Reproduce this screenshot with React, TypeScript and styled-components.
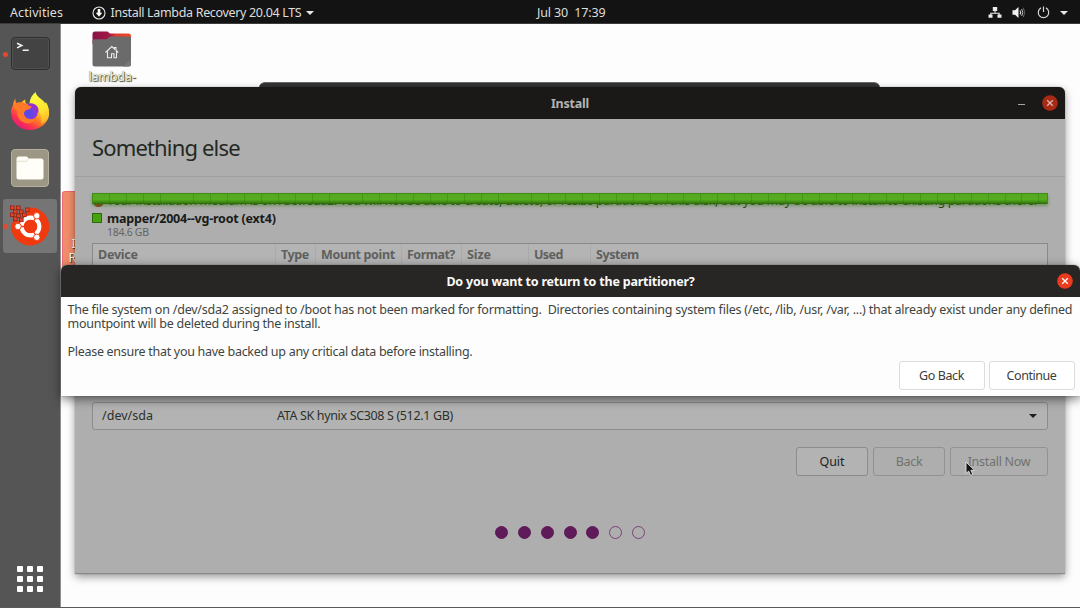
import React from "react";
import styled, { createGlobalStyle, css } from "styled-components";

const Global = createGlobalStyle`
  *, *::before, *::after { box-sizing: border-box; }
  body {
    margin: 0;
    overflow: hidden;
    background: #fdfdfd;
    font: 400 12.5px/14px "Noto Sans", "Open Sans", sans-serif;
    color: #3b3f3a;
  }
`;

/* Text with its own tracking, so that each label keeps its width */
const Label = styled.span<{ $track?: number }>`
  white-space: pre;
  letter-spacing: ${(p) => p.$track ?? -0.25}px;
`;

const Screen = styled.div`
  width: 1080px;
  height: 608px;
  display: flex;
  flex-direction: column;
  overflow: hidden;
  background: #fdfdfd;
  border-bottom: 1px solid #5a5a5a;
`;

/* ---------- Top bar ---------- */

const TopBar = styled.header`
  flex: none;
  height: 24px;
  display: grid;
  grid-template-columns: 527px auto 1fr;
  align-items: center;
  padding: 2px 12px 0 10px;
  background: #131313;
  border-bottom: 1px solid #3c3c3c;
  color: #dedede;
`;

const TopGroup = styled.div<{ $gap: number; $end?: boolean }>`
  display: flex;
  align-items: center;
  gap: ${(p) => p.$gap}px;
  justify-content: ${(p) => (p.$end ? "flex-end" : "flex-start")};
`;

const AppMenu = styled.div`
  display: flex;
  align-items: center;
  gap: 5px;
`;

const Caret = styled.i<{ $color: string }>`
  width: 0;
  height: 0;
  border: 4px solid transparent;
  border-top: 4.5px solid ${(p) => p.$color};
  border-bottom: 0;
`;

/* ---------- Dock ---------- */

const Body = styled.div`
  flex: 1;
  display: flex;
  min-height: 0;
`;

const Dock = styled.nav`
  flex: none;
  width: 61px;
  display: flex;
  flex-direction: column;
  align-items: center;
  gap: 3.4px;
  padding: 2.5px 0 15px 0;
  background: #555;
  border-right: 1px solid #909090;
`;

const DockItem = styled.div<{ $active?: boolean; $running?: boolean }>`
  position: relative;
  width: 54px;
  height: 54px;
  display: flex;
  align-items: center;
  justify-content: center;
  border-radius: 3px;
  background: ${(p) => (p.$active ? "#757575" : "transparent")};
  ${(p) =>
    p.$running &&
    css`
      &::before {
        content: "";
        position: absolute;
        left: 0;
        top: 25px;
        width: 5px;
        height: 5px;
        border-radius: 50%;
        background: #e5482d;
      }
    `}
`;

const TerminalTile = styled.div`
  width: 39px;
  height: 33px;
  padding: 3px 4px;
  border: 1px solid #2e2e2e;
  border-radius: 4px;
  background: #434343;
  box-shadow: inset 0 0 0 1px #505050;
  color: #f2f2f2;
`;

const FilesTile = styled.div`
  width: 38px;
  height: 38px;
  display: flex;
  align-items: center;
  justify-content: center;
  border-radius: 4px;
  border: 1.5px solid #b5b09c;
  background: #9c9785;
`;

const AppsGrid = styled.div`
  margin-top: auto;
  display: grid;
  grid-template-columns: repeat(3, 5.6px);
  grid-auto-rows: 5.6px;
  gap: 4.6px;
`;

const AppsDot = styled.i`
  border-radius: 1px;
  background: #fff;
`;

/* ---------- Desktop ---------- */

const Desk = styled.main`
  position: relative;
  flex: 1;
`;

const HomeIcon = styled.div`
  position: absolute;
  left: 21px;
  top: 7px;
  width: 60px;
  display: flex;
  flex-direction: column;
  align-items: center;
  gap: 3px;
  color: #f4f5ea;
  text-shadow: 1px 1px 1px #3d4020, 0 0 1px #56592e;
`;

const InstallerShortcut = styled.div`
  position: absolute;
  left: 0.5px;
  top: 167px;
  width: 14px;
  height: 80px;
  overflow: hidden;
  padding: 45px 0 0 6px;
  display: flex;
  flex-direction: column;
  border: 1px solid #ee6a72;
  border-right: 0;
  border-radius: 3px 0 0 0;
  background: #f28d6b;
  color: #fff;
  text-shadow: 1px 1px 1px #44200f;
`;

const BackWindow = styled.div`
  position: absolute;
  left: 198px;
  top: 58px;
  width: 621px;
  height: 30px;
  border-radius: 6px 6px 0 0;
  background: #343436;
  border-top: 1px solid #6a6a6a;
`;

const Window = styled.section`
  position: absolute;
  left: 14px;
  top: 63px;
  width: 990px;
  height: 487px;
  display: flex;
  flex-direction: column;
  border-radius: 6px 6px 0 0;
  background: #aeaeae;
  box-shadow: 0 3px 8px rgba(0, 0, 0, 0.4), 0 0 1px rgba(0, 0, 0, 0.6);
  border-bottom: 1px solid #888;
`;

const TitleBar = styled.div<{ $bg: string; $fg: string; $right: number }>`
  flex: none;
  height: 31.5px;
  display: grid;
  grid-template-columns: 1fr auto 1fr;
  align-items: center;
  padding: 0 ${(p) => p.$right}px;
  border-radius: 6px 6px 0 0;
  background: ${(p) => p.$bg};
  color: ${(p) => p.$fg};
  font-weight: 700;
`;

const Controls = styled.div`
  grid-column: 3;
  display: flex;
  justify-content: flex-end;
  align-items: center;
  gap: 17px;
`;

const Title = styled(Label)`
  grid-column: 2;
  padding-top: 2px;
`;

const Minimise = styled.i`
  width: 7px;
  height: 1px;
  margin-top: 3px;
  background: #a5a5a5;
`;

const Heading = styled.h1`
  flex: none;
  height: 58px;
  margin: 0;
  padding: 0 17px;
  display: flex;
  align-items: center;
  border-bottom: 1px solid #9f9f9f;
  color: #232823;
  font-weight: 400;
  font-size: 22px;
`;

const Content = styled.div`
  flex: 1;
  display: flex;
  flex-direction: column;
  padding: 16.5px 17px 0;
`;

const Notice = styled.div`
  position: absolute;
  left: 1px;
  right: 0;
  top: -1px;
  height: 17px;
  display: flex;
  align-items: center;
  gap: 3px;
  line-height: 17px;
  color: #24401a;
`;

const NoticeMark = styled.i`
  width: 11px;
  height: 11px;
  margin-top: 1px;
  border-radius: 50%;
  background: #8d3a20;
`;

const Usage = styled.div`
  position: relative;
  flex: none;
  height: 12px;
`;

const UsageBar = styled.div`
  position: absolute;
  inset: 0 0 1px 0;
  border: 1px solid #3f8d14;
  border-bottom: 0;
  background: repeating-linear-gradient(90deg, transparent 0 15.9px, rgba(40, 105, 8, 0.3) 15.9px 16.9px),
    linear-gradient(#58a823, #56ac1f 55%, #3c8411 85%, #2c620c);
  box-shadow: 0 2px 3px rgba(62, 124, 25, 0.5);
`;

const Legend = styled.div`
  flex: none;
  display: grid;
  grid-template-columns: 10px auto;
  column-gap: 5px;
  justify-content: start;
  margin-top: 7px;
  color: #191c19;
`;

const Swatch = styled.i`
  width: 10px;
  height: 10px;
  margin-top: 1px;
  border: 1px solid #2c6a0d;
  background: #45a30d;
`;

const LegendSize = styled(Label)`
  grid-column: 2;
  font-size: 10.5px;
  line-height: 12px;
  color: #646464;
`;

const Strong = styled(Label)`
  font-weight: 700;
`;

const Table = styled.div`
  flex: none;
  height: 152px;
  margin-top: 5px;
  border: 1px solid #8a8a8a;
  background: #b4b4b4;
`;

const TableHead = styled.div`
  display: grid;
  grid-template-columns: 183px 40px 86px 60px 67px 62px 1fr;
  height: 22px;
  align-items: center;
  color: #5f615e;
  font-weight: 700;
`;

const Column = styled.div`
  height: 100%;
  display: flex;
  align-items: center;
  padding: 0 0 1px 5px;
  border-right: 1px solid #aaa;
  &:last-child { border-right: 0; }
`;

const Select = styled.div`
  flex: none;
  height: 28.5px;
  margin-top: 6.5px;
  display: grid;
  grid-template-columns: 175px 1fr auto;
  align-items: center;
  padding: 0.5px 10px 0 9px;
  border: 1px solid #8c8c8c;
  border-radius: 3px;
  background: #b3b3b3;
  color: #2c302b;
`;

const Actions = styled.div<{ $gap: number }>`
  flex: none;
  display: flex;
  justify-content: flex-end;
  gap: ${(p) => p.$gap}px;
`;

const WindowActions = styled(Actions)`
  margin-top: 17px;
`;

const Button = styled.button<{ $w: number; $tone: "quiet" | "muted" | "light" }>`
  width: ${(p) => p.$w}px;
  height: 29px;
  display: flex;
  align-items: center;
  justify-content: center;
  padding: 0;
  border-radius: 3px;
  font: inherit;
  ${(p) =>
    p.$tone === "light"
      ? css`border: 1px solid #dcdcdc; background: #fff; color: #3b403a;`
      : p.$tone === "quiet"
      ? css`border: 1px solid #8c8c8c; background: #b3b3b3; color: #20241f;`
      : css`border: 1px solid #929292; background: #aeaeae; color: #70736f;`}
`;

const Steps = styled.div`
  flex: none;
  display: flex;
  justify-content: center;
  gap: 9.8px;
  margin-top: 50px;
`;

const Step = styled.i<{ $done: boolean }>`
  width: 13px;
  height: 13px;
  border-radius: 50%;
  border: 1px solid ${(p) => (p.$done ? "#5f1a59" : "#7a4176")};
  background: ${(p) => (p.$done ? "#5f1a59" : "transparent")};
`;

const Dialog = styled.section`
  position: absolute;
  left: 0;
  top: 241px;
  width: 1019px;
  height: 131px;
  display: flex;
  flex-direction: column;
  border-radius: 6px 6px 0 0;
  background: #fdfdfd;
  box-shadow: 0 3px 11px rgba(0, 0, 0, 0.55), 0 0 1px rgba(0, 0, 0, 0.7);
`;

const Message = styled.div`
  padding: 6px 6px 0 6.5px;
  display: flex;
  flex-direction: column;
  height: 64.5px;
  color: #3f453e;
`;

const Paragraph = styled.p`
  margin: 0 0 14px;
  display: flex;
  flex-direction: column;
`;

const DialogActions = styled(Actions)`
  padding-right: 5.5px;
`;

const PointerLayer = styled.svg`
  position: absolute;
  left: 904px;
  top: 437px;
`;

/* ---------- Drawings ---------- */

const InstallGlyph = () => (
  <svg width="14" height="14" viewBox="0 0 14 14">
    <circle cx="7" cy="7" r="6" fill="none" stroke="#e6e6e6" strokeWidth="1.1" />
    <path d="M5.7 3h2.6v3.8h2L7 10.8 3.7 6.8h2z" fill="#fff" />
  </svg>
);

const NetworkGlyph = () => (
  <svg width="14" height="13" viewBox="0 0 14 13" fill="#ececec">
    <path d="M4.8 1h4.4v4H7.5v1.7h4.2V8.5H13.5v3.2H9.5V8.5h1.200V7.700H3.300v.8h1.200v3.200H.5V8.500h1.800V6.700h4.200V5H4.800z" />
  </svg>
);

const SpeakerGlyph = () => (
  <svg width="14" height="13" viewBox="0 0 14 13">
    <path d="M.5 4.300h2.500L6.500 1v11L3 8.700H.5z" fill="#f2f2f2" />
    <path d="M8 4.500q1.300 2 0 4" fill="none" stroke="#e0e0e0" strokeWidth="1.1" />
    <path d="M9.700 3q2.300 3.500 0 7" fill="none" stroke="#c0c0c0" strokeWidth="1" />
    <path d="M11.300 1.800q3 4.700 0 9.400" fill="none" stroke="#777" strokeWidth=".8" />
  </svg>
);

const PowerGlyph = () => (
  <svg width="13" height="13" viewBox="0 0 13 13" fill="none" stroke="#d6d6d6" strokeWidth="1.2">
    <path d="M4 1.900a5.200 5.200 0 1 0 5 0M6.500 .5v5.500" />
  </svg>
);

const CloseGlyph = ({ fill, cross }: { fill: string; cross: string }) => (
  <svg width="16" height="16" viewBox="0 0 16 16">
    <circle cx="8" cy="8" r="7.8" fill={fill} />
    <path d="M5.200 5.200l5.600 5.600M10.800 5.200l-5.600 5.600" stroke={cross} strokeWidth="1.3" />
  </svg>
);

const PromptGlyph = () => (
  <svg width="16" height="14" viewBox="0 0 16 14" fill="none" stroke="#f4f4f4" strokeWidth="1.5">
    <path d="M1 2.200l4.800 2.300L1 6.900M6.700 9.300h6" />
  </svg>
);

const FirefoxGlyph = () => (
  <svg width="40" height="40" viewBox="0 0 40 40">
    <defs>
      <linearGradient id="fxBody" x1="0.85" y1="0.1" x2="0.2" y2="0.9">
        <stop offset="0" stopColor="#fff44c" />
        <stop offset=".3" stopColor="#ffc92a" />
        <stop offset=".55" stopColor="#ff7a24" />
        <stop offset=".8" stopColor="#fb3150" />
        <stop offset="1" stopColor="#ee1a78" />
      </linearGradient>
      <radialGradient id="fxGlobe" cx=".4" cy=".6" r=".7">
        <stop offset="0" stopColor="#4b4be6" />
        <stop offset=".6" stopColor="#7d3fe0" />
        <stop offset="1" stopColor="#a92bc0" />
      </radialGradient>
      <linearGradient id="fxTail" x1=".3" y1="0" x2=".6" y2="1">
        <stop offset="0" stopColor="#f8ff45" />
        <stop offset=".6" stopColor="#ffe52e" />
        <stop offset="1" stopColor="#ffb52a" />
      </linearGradient>
    </defs>
    <path
      d="M5.500 7.500c-.3 2 .1 3.400.8 4.600 1.700-.6 3.400-.5 4.800 0 1-1.500 2.300-2.600 4.200-3.500-.3 1.700 0 3 .9 4.200l3 .3 8-2 9 1.500c2.500 4 3.400 8.500 2.600 13C36.800 33 29.500 39 20.300 39 10 39 1.500 31.500 1 22c-.1-3 .6-5.400 1.900-7.600C3.200 12 4 9.500 5.500 7.500z"
      fill="url(#fxBody)"
    />
    <path
      d="M25.600 1c.8 4 4.300 6 7 8.300 1.200 1 1.900 2 2.300 3.200.6-.2.900-.9 1-1.500 2.500 4 3.400 8.500 2.600 13-1 4-3.500 7-7.500 9 1.600-5.300-.2-10.800-3.800-14-3-2.500-7-4-7.800-6.500.5-5 3-9 6.200-11.500z"
      fill="url(#fxTail)"
    />
    <circle cx="20" cy="21" r="7.8" fill="url(#fxGlobe)" />
    <path d="M17 13c3.500-1.800 8.500-.8 10.500 2.800 1.300 2.400 1.300 4.500.6 6.200-1-3.200-3.600-5-6.600-5.600z" fill="#9a2fd0" />
    <path
      d="M2.900 14.400c3.500-3.500 9-4.200 13.300-1.600 1.200 1.800 3 2.200 5.500 2.500-.8 2.500-3 3.300-5 3.600-1.500.4-2.700 1.600-2.700 3.400 0 3 2.500 5.800 6.500 6 2.600.1 4.600-.8 6.200-2-2 5-7 7-11.700 5.700-5.200-1.500-8-6-7.700-11-1.400-3.500-3-3.500-4.400-6.600z"
      fill="#ff7a28"
    />
  </svg>
);

const FilesGlyph = () => (
  <svg width="28" height="24" viewBox="0 0 28 24">
    <path d="M.5 3A2.500 2.500 0 0 1 3 .5h7.500c1 0 1.500 2 2.500 2h12A2.500 2.500 0 0 1 27.500 5v16A2.500 2.500 0 0 1 25 23.500H3A2.500 2.500 0 0 1 .5 21z" fill="#fffef8" />
    <path d="M1 5.300h9.500l2-2.200" fill="none" stroke="#dad6c4" strokeWidth=".8" />
  </svg>
);

const pixels: [number, number][] = [
  [1, 1], [7, 1], [4, 5], [10, 5], [16, 3], [1, 8], [7, 9], [13, 8], [4, 12], [10, 13],
];

const UbuntuInstallerGlyph = () => (
  <svg width="42" height="42" viewBox="0 0 42 42">
    <path d="M21 2.500A19 19 0 1 1 2.500 25C2 21 3 18 5 15l5 1 6-5z" fill="#f0390f" />
    <circle cx="21.5" cy="21.5" r="8.8" fill="none" stroke="#fff" strokeWidth="4.2" />
    <g stroke="#f0390f" strokeWidth="1.3">
      <path d="M21.500 21.500L9 21.500M21.500 21.500l6.500-11M21.500 21.500l6.500 11" />
    </g>
    <circle cx="21.5" cy="21.5" r="6.6" fill="#f0390f" />
    <g fill="#fff" stroke="#f0390f" strokeWidth=".9">
      <circle cx="9" cy="21.5" r="3.2" />
      <circle cx="27.8" cy="10.8" r="3.2" />
      <circle cx="27.8" cy="32.3" r="3.2" />
    </g>
    <g fill="#ec4428" stroke="#9a2413" strokeWidth=".9">
      {pixels.map(([x, y]) => (
        <rect key={`${x}-${y}`} x={x + 0.5} y={y} width="3.6" height="3.6" />
      ))}
    </g>
  </svg>
);

const HomeFolderGlyph = () => (
  <svg width="40" height="36" viewBox="0 0 40 36">
    <defs>
      <linearGradient id="folderTop" x1="0" x2="1">
        <stop offset="0" stopColor="#8a1145" />
        <stop offset=".45" stopColor="#a31a45" />
        <stop offset=".6" stopColor="#dd3a30" />
        <stop offset="1" stopColor="#f04a22" />
      </linearGradient>
    </defs>
    <path d="M.5 3A2.500 2.500 0 0 1 3 .5h12.500L18 2.500h18.500A2.500 2.500 0 0 1 39 5v8H.5z" fill="url(#folderTop)" />
    <path d="M.5 10c0-1 .8-1.800 2-1.800h12L18 5.500h19a2 2 0 0 1 2 2V33a2.500 2.500 0 0 1-2.500 2.500H3A2.500 2.500 0 0 1 .5 33z" fill="#6b6b6b" />
    <path d="M39 28v5a2.500 2.500 0 0 1-2.500 2.500H31z" fill="#767676" />
    <path d="M13.500 21.500l6.300-6 2.700 2.500v-1.500h1.500V19.500l2.300 2M15.500 20.500v6.300h4v-4h2.500v4h2.500v-6.300" fill="none" stroke="#ececec" strokeWidth="1.1" />
  </svg>
);

/* ---------- Page ---------- */

const columns: [string, number][] = [
  ["Device", -0.23],
  ["Type", -0.45],
  ["Mount point", -0.33],
  ["Format?", -0.5],
  ["Size", -0.08],
  ["Used", -0.6],
  ["System", -0.45],
];

export default function App() {
  return (
    <Screen>
      <Global />
      <TopBar>
        <TopGroup $gap={28.5}>
          <Label $track={0.1}>Activities</Label>
          <AppMenu>
            <InstallGlyph />
            <Label $track={-0.33}>Install Lambda Recovery 20.04 LTS</Label>
            <Caret $color="#e8e8e8" />
          </AppMenu>
        </TopGroup>
        <Label $track={-0.15}>Jul 30  17:39</Label>
        <TopGroup $gap={10.5} $end>
          <NetworkGlyph />
          <SpeakerGlyph />
          <PowerGlyph />
          <Caret $color="#e8e8e8" />
        </TopGroup>
      </TopBar>

      <Body>
        <Dock>
          <DockItem $running>
            <TerminalTile>
              <PromptGlyph />
            </TerminalTile>
          </DockItem>
          <DockItem>
            <FirefoxGlyph />
          </DockItem>
          <DockItem>
            <FilesTile>
              <FilesGlyph />
            </FilesTile>
          </DockItem>
          <DockItem $active $running>
            <UbuntuInstallerGlyph />
          </DockItem>
          <AppsGrid>
            {Array.from({ length: 9 }, (_, i) => (
              <AppsDot key={i} />
            ))}
          </AppsGrid>
        </Dock>

        <Desk>
          <HomeIcon>
            <HomeFolderGlyph />
            <Label $track={-0.2}>lambda-</Label>
          </HomeIcon>
          <InstallerShortcut>
            <Label>{" I"}</Label>
            <Label>R</Label>
          </InstallerShortcut>
          <BackWindow />

          <Window>
            <TitleBar $bg="#1a1917" $fg="#b4b4b4" $right={7.5}>
              <Title $track={-0.2}>Install</Title>
              <Controls>
                <Minimise />
                <CloseGlyph fill="#a92a14" cross="#d8b9b0" />
              </Controls>
            </TitleBar>
            <Heading>
              <Label $track={-0.84}>Something else</Label>
            </Heading>
            <Content>
              <Usage>
                <Notice>
                  <NoticeMark />
                  <Label $track={-0.32}>
                    Your installation medium is on /dev/sda2. You will not be able to create, delete, or resize partitions on this disk, but you may be able to install to existing partitions there.
                  </Label>
                </Notice>
                <UsageBar />
              </Usage>
              <Legend>
                <Swatch />
                <Strong $track={-0.21}>mapper/2004--vg-root (ext4)</Strong>
                <LegendSize $track={-0.29}>184.6 GB</LegendSize>
              </Legend>
              <Table>
                <TableHead>
                  {columns.map(([name, track]) => (
                    <Column key={name}>
                      <Label $track={track}>{name}</Label>
                    </Column>
                  ))}
                </TableHead>
              </Table>
              <Select>
                <Label $track={0.02}>/dev/sda</Label>
                <Label $track={-0.35}>ATA SK hynix SC308 S (512.1 GB)</Label>
                <Caret $color="#1d1d1d" />
              </Select>
              <WindowActions $gap={5}>
                <Button $w={72} $tone="quiet">
                  <Label $track={-0.07}>Quit</Label>
                </Button>
                <Button $w={72} $tone="muted">
                  <Label $track={-0.27}>Back</Label>
                </Button>
                <Button $w={98} $tone="muted">
                  <Label $track={-0.28}>Install Now</Label>
                </Button>
              </WindowActions>
              <Steps>
                {[true, true, true, true, true, false, false].map((done, i) => (
                  <Step key={i} $done={done} />
                ))}
              </Steps>
            </Content>
          </Window>

          <Dialog>
            <TitleBar $bg="#272624" $fg="#fafafa" $right={7}>
              <Title $track={-0.2}>Do you want to return to the partitioner?</Title>
              <Controls>
                <CloseGlyph fill="#ea3b1e" cross="#fff" />
              </Controls>
            </TitleBar>
            <Message>
              <Paragraph>
                <Label $track={-0.22}>
                  {"The file system on /dev/sda2 assigned to /boot has not been marked for formatting.  Directories containing system files (/etc, /lib, /usr, /var, ...) that already exist under any defined"}
                </Label>
                <Label $track={-0.26}>mountpoint will be deleted during the install.</Label>
              </Paragraph>
              <Paragraph>
                <Label $track={-0.29}>Please ensure that you have backed up any critical data before installing.</Label>
              </Paragraph>
            </Message>
            <DialogActions $gap={4}>
              <Button $w={86} $tone="light">
                <Label $track={-0.4}>Go Back</Label>
              </Button>
              <Button $w={86} $tone="light">
                <Label $track={-0.45}>Continue</Label>
              </Button>
            </DialogActions>
          </Dialog>

          <PointerLayer width="11" height="16" viewBox="0 0 11 16">
            <path d="M1 1v11.500l2.700-2.400 1.900 4.300 2.200-1-1.900-4.100h3.700z" fill="#151515" stroke="#e4e4e4" strokeWidth=".9" />
          </PointerLayer>
        </Desk>
      </Body>
    </Screen>
  );
}
